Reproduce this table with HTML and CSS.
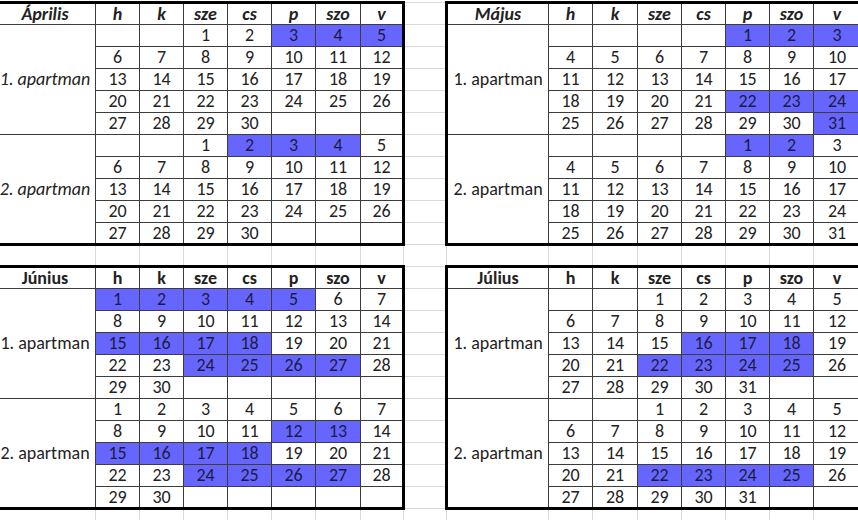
FILE: index.html
```html
<!DOCTYPE html>
<html lang="hu">
<head>
<meta charset="utf-8">
<title>Foglalási naptár</title>
<link rel="stylesheet" href="styles.css">
</head>
<body>
<table class="sheet">
<colgroup>
<col class="w-lab"><col class="w-d"><col class="w-d"><col class="w-d"><col class="w-d"><col class="w-d"><col class="w-d5"><col class="w-d6">
<col class="w-gap">
<col class="w-lab"><col class="w-d"><col class="w-d5"><col class="w-d"><col class="w-d"><col class="w-d"><col class="w-d"><col class="w-last">
</colgroup>
<tbody>
<tr>
<td class="c t l hi">Április</td><td class="c t hi">h</td><td class="c t hi">k</td><td class="c t hi">sze</td><td class="c t hi">cs</td><td class="c t hi">p</td><td class="c t hi">szo</td><td class="c t r hi">v</td>
<td class="g"></td>
<td class="c t l hi">Május</td><td class="c t hi">h</td><td class="c t hi">k</td><td class="c t hi">sze</td><td class="c t hi">cs</td><td class="c t hi">p</td><td class="c t hi">szo</td><td class="c t r hi">v</td>
</tr>
<tr>
<td class="c l lab it" rowspan="5">1. apartman</td><td class="c"></td><td class="c"></td><td class="c">1</td><td class="c">2</td><td class="c hl">3</td><td class="c hl">4</td><td class="c r hl">5</td>
<td class="g"></td>
<td class="c l lab" rowspan="5">1. apartman</td><td class="c"></td><td class="c"></td><td class="c"></td><td class="c"></td><td class="c hl">1</td><td class="c hl">2</td><td class="c r hl">3</td>
</tr>
<tr>
<td class="c">6</td><td class="c">7</td><td class="c">8</td><td class="c">9</td><td class="c">10</td><td class="c">11</td><td class="c r">12</td>
<td class="g"></td>
<td class="c">4</td><td class="c">5</td><td class="c">6</td><td class="c">7</td><td class="c">8</td><td class="c">9</td><td class="c r">10</td>
</tr>
<tr>
<td class="c">13</td><td class="c">14</td><td class="c">15</td><td class="c">16</td><td class="c">17</td><td class="c">18</td><td class="c r">19</td>
<td class="g"></td>
<td class="c">11</td><td class="c">12</td><td class="c">13</td><td class="c">14</td><td class="c">15</td><td class="c">16</td><td class="c r">17</td>
</tr>
<tr>
<td class="c">20</td><td class="c">21</td><td class="c">22</td><td class="c">23</td><td class="c">24</td><td class="c">25</td><td class="c r">26</td>
<td class="g"></td>
<td class="c">18</td><td class="c">19</td><td class="c">20</td><td class="c">21</td><td class="c hl">22</td><td class="c hl">23</td><td class="c r hl">24</td>
</tr>
<tr>
<td class="c">27</td><td class="c">28</td><td class="c">29</td><td class="c">30</td><td class="c"></td><td class="c"></td><td class="c r"></td>
<td class="g"></td>
<td class="c">25</td><td class="c">26</td><td class="c">27</td><td class="c">28</td><td class="c">29</td><td class="c">30</td><td class="c r hl">31</td>
</tr>
<tr>
<td class="c l b lab it" rowspan="5">2. apartman</td><td class="c"></td><td class="c"></td><td class="c">1</td><td class="c hl">2</td><td class="c hl">3</td><td class="c hl">4</td><td class="c r">5</td>
<td class="g"></td>
<td class="c l b lab" rowspan="5">2. apartman</td><td class="c"></td><td class="c"></td><td class="c"></td><td class="c"></td><td class="c hl">1</td><td class="c hl">2</td><td class="c r">3</td>
</tr>
<tr>
<td class="c">6</td><td class="c">7</td><td class="c">8</td><td class="c">9</td><td class="c">10</td><td class="c">11</td><td class="c r">12</td>
<td class="g"></td>
<td class="c">4</td><td class="c">5</td><td class="c">6</td><td class="c">7</td><td class="c">8</td><td class="c">9</td><td class="c r">10</td>
</tr>
<tr>
<td class="c">13</td><td class="c">14</td><td class="c">15</td><td class="c">16</td><td class="c">17</td><td class="c">18</td><td class="c r">19</td>
<td class="g"></td>
<td class="c">11</td><td class="c">12</td><td class="c">13</td><td class="c">14</td><td class="c">15</td><td class="c">16</td><td class="c r">17</td>
</tr>
<tr>
<td class="c">20</td><td class="c">21</td><td class="c">22</td><td class="c">23</td><td class="c">24</td><td class="c">25</td><td class="c r">26</td>
<td class="g"></td>
<td class="c">18</td><td class="c">19</td><td class="c">20</td><td class="c">21</td><td class="c">22</td><td class="c">23</td><td class="c r">24</td>
</tr>
<tr>
<td class="c b">27</td><td class="c b">28</td><td class="c b">29</td><td class="c b">30</td><td class="c b"></td><td class="c b"></td><td class="c b r"></td>
<td class="g"></td>
<td class="c b">25</td><td class="c b">26</td><td class="c b">27</td><td class="c b">28</td><td class="c b">29</td><td class="c b">30</td><td class="c b r">31</td>
</tr>
<tr>
<td class="g"></td><td class="g"></td><td class="g"></td><td class="g"></td><td class="g"></td><td class="g"></td><td class="g"></td><td class="g"></td>
<td class="g"></td>
<td class="g"></td><td class="g"></td><td class="g"></td><td class="g"></td><td class="g"></td><td class="g"></td><td class="g"></td><td class="g"></td>
</tr>
<tr>
<td class="c t l hb">Június</td><td class="c t hb">h</td><td class="c t hb">k</td><td class="c t hb">sze</td><td class="c t hb">cs</td><td class="c t hb">p</td><td class="c t hb">szo</td><td class="c t r hb">v</td>
<td class="g"></td>
<td class="c t l hb">Július</td><td class="c t hb">h</td><td class="c t hb">k</td><td class="c t hb">sze</td><td class="c t hb">cs</td><td class="c t hb">p</td><td class="c t hb">szo</td><td class="c t r hb">v</td>
</tr>
<tr>
<td class="c l lab" rowspan="5">1. apartman</td><td class="c hl">1</td><td class="c hl">2</td><td class="c hl">3</td><td class="c hl">4</td><td class="c hl">5</td><td class="c">6</td><td class="c r">7</td>
<td class="g"></td>
<td class="c l lab" rowspan="5">1. apartman</td><td class="c"></td><td class="c"></td><td class="c">1</td><td class="c">2</td><td class="c">3</td><td class="c">4</td><td class="c r">5</td>
</tr>
<tr>
<td class="c">8</td><td class="c">9</td><td class="c">10</td><td class="c">11</td><td class="c">12</td><td class="c">13</td><td class="c r">14</td>
<td class="g"></td>
<td class="c">6</td><td class="c">7</td><td class="c">8</td><td class="c">9</td><td class="c">10</td><td class="c">11</td><td class="c r">12</td>
</tr>
<tr>
<td class="c hl">15</td><td class="c hl">16</td><td class="c hl">17</td><td class="c hl">18</td><td class="c">19</td><td class="c">20</td><td class="c r">21</td>
<td class="g"></td>
<td class="c">13</td><td class="c">14</td><td class="c">15</td><td class="c hl">16</td><td class="c hl">17</td><td class="c hl">18</td><td class="c r">19</td>
</tr>
<tr>
<td class="c">22</td><td class="c">23</td><td class="c hl">24</td><td class="c hl">25</td><td class="c hl">26</td><td class="c hl">27</td><td class="c r">28</td>
<td class="g"></td>
<td class="c">20</td><td class="c">21</td><td class="c hl">22</td><td class="c hl">23</td><td class="c hl">24</td><td class="c hl">25</td><td class="c r">26</td>
</tr>
<tr>
<td class="c">29</td><td class="c">30</td><td class="c"></td><td class="c"></td><td class="c"></td><td class="c"></td><td class="c r"></td>
<td class="g"></td>
<td class="c">27</td><td class="c">28</td><td class="c">29</td><td class="c">30</td><td class="c">31</td><td class="c"></td><td class="c r"></td>
</tr>
<tr>
<td class="c l b lab" rowspan="5">2. apartman</td><td class="c">1</td><td class="c">2</td><td class="c">3</td><td class="c">4</td><td class="c">5</td><td class="c">6</td><td class="c r">7</td>
<td class="g"></td>
<td class="c l b lab" rowspan="5">2. apartman</td><td class="c"></td><td class="c"></td><td class="c">1</td><td class="c">2</td><td class="c">3</td><td class="c">4</td><td class="c r">5</td>
</tr>
<tr>
<td class="c">8</td><td class="c">9</td><td class="c">10</td><td class="c">11</td><td class="c hl">12</td><td class="c hl">13</td><td class="c r">14</td>
<td class="g"></td>
<td class="c">6</td><td class="c">7</td><td class="c">8</td><td class="c">9</td><td class="c">10</td><td class="c">11</td><td class="c r">12</td>
</tr>
<tr>
<td class="c hl">15</td><td class="c hl">16</td><td class="c hl">17</td><td class="c hl">18</td><td class="c">19</td><td class="c">20</td><td class="c r">21</td>
<td class="g"></td>
<td class="c">13</td><td class="c">14</td><td class="c">15</td><td class="c">16</td><td class="c">17</td><td class="c">18</td><td class="c r">19</td>
</tr>
<tr>
<td class="c">22</td><td class="c">23</td><td class="c hl">24</td><td class="c hl">25</td><td class="c hl">26</td><td class="c hl">27</td><td class="c r">28</td>
<td class="g"></td>
<td class="c">20</td><td class="c">21</td><td class="c hl">22</td><td class="c hl">23</td><td class="c hl">24</td><td class="c hl">25</td><td class="c r">26</td>
</tr>
<tr>
<td class="c b">29</td><td class="c b">30</td><td class="c b"></td><td class="c b"></td><td class="c b"></td><td class="c b"></td><td class="c b r"></td>
<td class="g"></td>
<td class="c b">27</td><td class="c b">28</td><td class="c b">29</td><td class="c b">30</td><td class="c b">31</td><td class="c b"></td><td class="c b r"></td>
</tr>
<tr>
<td class="g"></td><td class="g"></td><td class="g"></td><td class="g"></td><td class="g"></td><td class="g"></td><td class="g"></td><td class="g"></td>
<td class="g"></td>
<td class="g"></td><td class="g"></td><td class="g"></td><td class="g"></td><td class="g"></td><td class="g"></td><td class="g"></td><td class="g"></td>
</tr>
</tbody>
</table>
</body>
</html>
```

FILE: styles.css
```css
html, body {
  margin: 0;
  padding: 0;
  background: #ffffff;
}
body {
  width: 858px;
  height: 520px;
  overflow: hidden;
  font-family: Carlito, Lato, "Liberation Sans", sans-serif;
  font-size: 18px;
  color: #222222;
}
.sheet {
  border-collapse: collapse;
  table-layout: fixed;
  width: 868px;
  margin: 1px 0 0 -8px;
}
.w-lab { width: 102px; }
.w-d { width: 44px; }
.w-d5 { width: 45px; }
.w-d6 { width: 43px; }
.w-gap { width: 43px; }
.w-last { width: 48px; }
.sheet tr { height: 22px; }
.sheet td {
  padding: 0;
  border: 1px solid #d9d9d9;
  text-align: center;
  vertical-align: middle;
  line-height: 19px;
  white-space: nowrap;
  overflow: hidden;
}
.sheet td.c { border: 1px solid #3c3c3c; }
.sheet td.t { border-top: 3px solid #000; }
.sheet td.b { border-bottom: 3px solid #000; }
.sheet td.l { border-left: 3px solid #000; }
.sheet td.r { border-right: 3px solid #000; }
.hl { background: #6666ff; color: #1c1c40; }
.hi { font-weight: bold; font-style: italic; }
.hb { font-weight: bold; }
.it { font-style: italic; }
.lab { padding-top: 4px; }
```
